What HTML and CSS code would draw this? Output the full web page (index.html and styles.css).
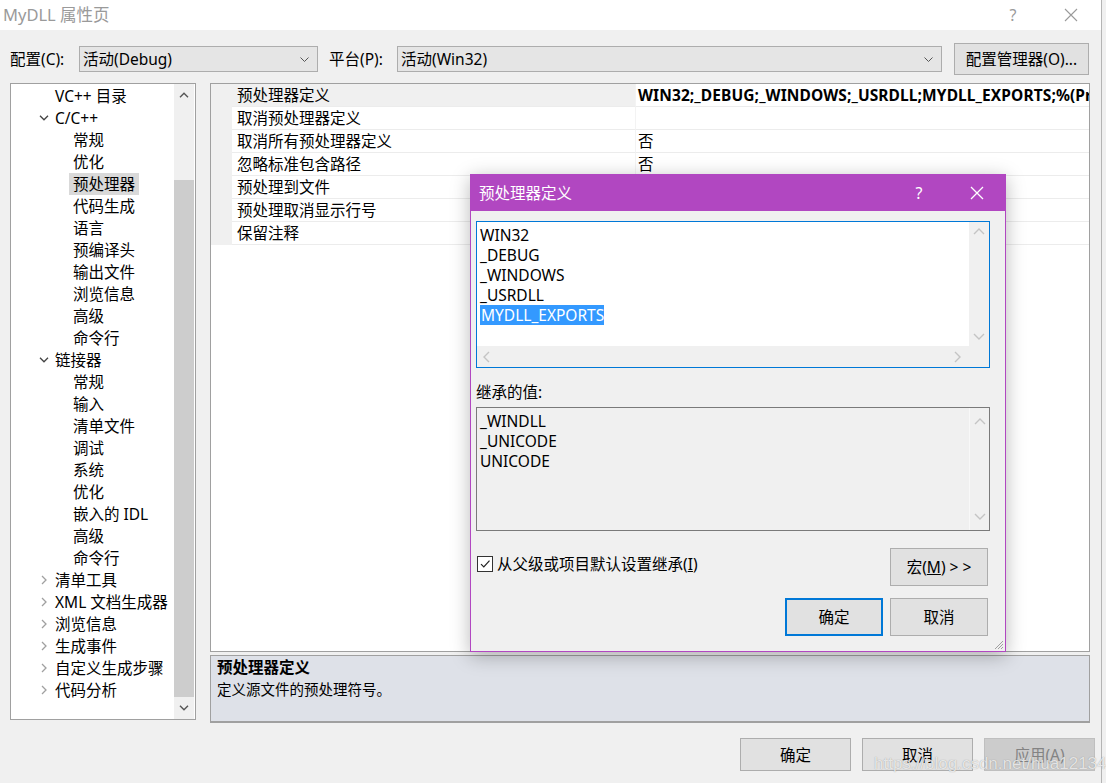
FILE: index.html
```html
<!DOCTYPE html>
<html lang="zh-CN">
<head>
<meta charset="utf-8">
<title>MyDLL 属性页</title>
<link rel="stylesheet" href="styles.css">
</head>
<body>
<div class="window">
  <div class="titlebar">
    <div class="title">MyDLL 属性页</div>
    <div class="tb-help">?</div>
    <div class="tb-close">
      <svg width="14" height="14" viewBox="0 0 14 14"><path d="M1 1 L13 13 M13 1 L1 13" stroke="#9a9a9a" stroke-width="1.1" fill="none"/></svg>
    </div>
  </div>

  <div class="toolbar">
    <span class="tlabel">配置(C):</span>
    <div class="select sel-config"><span>活动(Debug)</span>
      <svg width="9" height="5" viewBox="0 0 9 5"><path d="M0.5 0.5 L4.5 4.5 L8.5 0.5" stroke="#555" fill="none"/></svg>
    </div>
    <span class="tlabel plat">平台(P):</span>
    <div class="select sel-platform"><span>活动(Win32)</span>
      <svg width="9" height="5" viewBox="0 0 9 5"><path d="M0.5 0.5 L4.5 4.5 L8.5 0.5" stroke="#555" fill="none"/></svg>
    </div>
    <div class="btn cfgmgr">配置管理器(O)...</div>
  </div>

  <div class="main">
    <div class="tree">
      <div class="tree-list">
        <div class="ti l1"><span class="tw"></span>VC++ 目录</div>
        <div class="ti l1"><span class="tw"><svg width="10" height="6" viewBox="0 0 10 6"><path d="M1 0.8 L5 4.8 L9 0.8" stroke="#444" stroke-width="1.3" fill="none"/></svg></span>C/C++</div>
        <div class="ti l2"><span>常规</span></div>
        <div class="ti l2"><span>优化</span></div>
        <div class="ti l2"><span class="hl">预处理器</span></div>
        <div class="ti l2"><span>代码生成</span></div>
        <div class="ti l2"><span>语言</span></div>
        <div class="ti l2"><span>预编译头</span></div>
        <div class="ti l2"><span>输出文件</span></div>
        <div class="ti l2"><span>浏览信息</span></div>
        <div class="ti l2"><span>高级</span></div>
        <div class="ti l2"><span>命令行</span></div>
        <div class="ti l1"><span class="tw"><svg width="10" height="6" viewBox="0 0 10 6"><path d="M1 0.8 L5 4.8 L9 0.8" stroke="#444" stroke-width="1.3" fill="none"/></svg></span>链接器</div>
        <div class="ti l2"><span>常规</span></div>
        <div class="ti l2"><span>输入</span></div>
        <div class="ti l2"><span>清单文件</span></div>
        <div class="ti l2"><span>调试</span></div>
        <div class="ti l2"><span>系统</span></div>
        <div class="ti l2"><span>优化</span></div>
        <div class="ti l2"><span>嵌入的 IDL</span></div>
        <div class="ti l2"><span>高级</span></div>
        <div class="ti l2"><span>命令行</span></div>
        <div class="ti l1"><span class="tw"><svg width="6" height="10" viewBox="0 0 6 10"><path d="M1 1 L5 5 L1 9" stroke="#a0a0a0" stroke-width="1.3" fill="none"/></svg></span>清单工具</div>
        <div class="ti l1"><span class="tw"><svg width="6" height="10" viewBox="0 0 6 10"><path d="M1 1 L5 5 L1 9" stroke="#a0a0a0" stroke-width="1.3" fill="none"/></svg></span>XML 文档生成器</div>
        <div class="ti l1"><span class="tw"><svg width="6" height="10" viewBox="0 0 6 10"><path d="M1 1 L5 5 L1 9" stroke="#a0a0a0" stroke-width="1.3" fill="none"/></svg></span>浏览信息</div>
        <div class="ti l1"><span class="tw"><svg width="6" height="10" viewBox="0 0 6 10"><path d="M1 1 L5 5 L1 9" stroke="#a0a0a0" stroke-width="1.3" fill="none"/></svg></span>生成事件</div>
        <div class="ti l1"><span class="tw"><svg width="6" height="10" viewBox="0 0 6 10"><path d="M1 1 L5 5 L1 9" stroke="#a0a0a0" stroke-width="1.3" fill="none"/></svg></span>自定义生成步骤</div>
        <div class="ti l1"><span class="tw"><svg width="6" height="10" viewBox="0 0 6 10"><path d="M1 1 L5 5 L1 9" stroke="#a0a0a0" stroke-width="1.3" fill="none"/></svg></span>代码分析</div>
      </div>
      <div class="vscroll">
        <div class="sb-arrow"><svg width="10" height="6" viewBox="0 0 10 6"><path d="M1 5.2 L5 1.2 L9 5.2" stroke="#555" stroke-width="1.4" fill="none"/></svg></div>
        <div class="sb-track"><div class="sb-space"></div><div class="sb-thumb"></div></div>
        <div class="sb-arrow"><svg width="10" height="6" viewBox="0 0 10 6"><path d="M1 0.8 L5 4.8 L9 0.8" stroke="#555" stroke-width="1.4" fill="none"/></svg></div>
      </div>
    </div>

    <div class="right">
      <div class="grid">
        <div class="prow sel"><div class="pstrip"></div><div class="pname">预处理器定义</div><div class="pval strong">WIN32;_DEBUG;_WINDOWS;_USRDLL;MYDLL_EXPORTS;%(PreprocessorDefinitions)</div></div>
        <div class="prow"><div class="pstrip"></div><div class="pname">取消预处理器定义</div><div class="pval"></div></div>
        <div class="prow"><div class="pstrip"></div><div class="pname">取消所有预处理器定义</div><div class="pval">否</div></div>
        <div class="prow"><div class="pstrip"></div><div class="pname">忽略标准包含路径</div><div class="pval">否</div></div>
        <div class="prow"><div class="pstrip"></div><div class="pname">预处理到文件</div><div class="pval">否</div></div>
        <div class="prow"><div class="pstrip"></div><div class="pname">预处理取消显示行号</div><div class="pval">否</div></div>
        <div class="prow"><div class="pstrip"></div><div class="pname">保留注释</div><div class="pval">否</div></div>
      </div>
      <div class="desc">
        <div class="desc-title">预处理器定义</div>
        <div class="desc-text">定义源文件的预处理符号。</div>
      </div>
    </div>
  </div>

  <div class="footer">
    <div class="btn fbtn">确定</div>
    <div class="btn fbtn">取消</div>
    <div class="btn fbtn disabled">应用(A)</div>
  </div>

  <div class="dlg">
    <div class="dlg-title">
      <span class="dlg-name">预处理器定义</span>
      <span class="dlg-help">?</span>
      <span class="dlg-x"><svg width="14" height="14" viewBox="0 0 14 14"><path d="M1 1 L13 13 M13 1 L1 13" stroke="#fff" stroke-width="1.3" fill="none"/></svg></span>
    </div>
    <div class="dlg-body">
      <div class="edit">
        <div class="edit-main">
          <div class="edit-text">
            <div class="line">WIN32</div>
            <div class="line">_DEBUG</div>
            <div class="line">_WINDOWS</div>
            <div class="line">_USRDLL</div>
            <div class="line"><span class="selection">MYDLL_EXPORTS</span></div>
          </div>
          <div class="evsb">
            <svg width="12" height="7" viewBox="0 0 12 7"><path d="M1 6 L6 1 L11 6" stroke="#c4c4c4" stroke-width="1.4" fill="none"/></svg>
            <svg width="12" height="7" viewBox="0 0 12 7"><path d="M1 1 L6 6 L11 1" stroke="#c4c4c4" stroke-width="1.4" fill="none"/></svg>
          </div>
        </div>
        <div class="ehsb">
          <svg width="7" height="12" viewBox="0 0 7 12"><path d="M6 1 L1 6 L6 11" stroke="#c4c4c4" stroke-width="1.4" fill="none"/></svg>
          <svg width="7" height="12" viewBox="0 0 7 12"><path d="M1 1 L6 6 L1 11" stroke="#c4c4c4" stroke-width="1.4" fill="none"/></svg>
        </div>
      </div>
      <div class="inh-label">继承的值:</div>
      <div class="inh">
        <div class="inh-text">
          <div class="line">_WINDLL</div>
          <div class="line">_UNICODE</div>
          <div class="line">UNICODE</div>
        </div>
        <div class="evsb inh-sb">
          <svg width="12" height="7" viewBox="0 0 12 7"><path d="M1 6 L6 1 L11 6" stroke="#c4c4c4" stroke-width="1.4" fill="none"/></svg>
          <svg width="12" height="7" viewBox="0 0 12 7"><path d="M1 1 L6 6 L11 1" stroke="#c4c4c4" stroke-width="1.4" fill="none"/></svg>
        </div>
      </div>
      <div class="chkrow">
        <div class="chk">
          <span class="box"><svg width="12" height="12" viewBox="0 0 12 12"><path d="M2 6.2 L4.8 9 L10.5 2.6" stroke="#222" stroke-width="1.2" fill="none"/></svg></span>
          <span>从父级或项目默认设置继承(<u>I</u>)</span>
        </div>
        <div class="btn dbtn">宏(<u>M</u>)&nbsp;&gt; &gt;</div>
      </div>
      <div class="btnrow">
        <div class="btn dbtn primary">确定</div>
        <div class="btn dbtn">取消</div>
      </div>
    </div>
    <div class="grip">
      <svg width="10" height="10" viewBox="0 0 10 10"><path d="M9 1 L1 9 M9 4 L4 9 M9 7 L7 9" stroke="#a0a0a0" stroke-width="1" fill="none"/></svg>
    </div>
  </div>

  <div class="watermark">https://blog.csdn.net/hua12134</div>
</div>
</body>
</html>
```

FILE: styles.css
```css
* { box-sizing: border-box; }

html, body {
  margin: 0;
  padding: 0;
  background: #f0f0f0;
}

body {
  font-family: "Noto Sans", "Noto Sans CJK SC", sans-serif;
  font-size: 15.5px;
  color: #000;
  width: 1106px;
  height: 783px;
  overflow: hidden;
}

.window {
  position: relative;
  width: 1102px;
  height: 783px;
  background: #f0f0f0;
  border-right: 1px solid #b4b4b4;
}

/* title bar */
.titlebar {
  height: 30px;
  background: #fff;
  display: flex;
  align-items: center;
}
.title {
  flex: 1;
  padding-left: 3px;
  font-size: 16.5px;
  color: #9a9a9a;
  line-height: 30px;
}
.tb-help {
  width: 58px;
  text-align: center;
  color: #9a9a9a;
  font-size: 16px;
}
.tb-close {
  width: 58px;
  display: flex;
  justify-content: center;
  margin-right: 1px;
}

/* toolbar */
.toolbar {
  display: flex;
  align-items: center;
  height: 32px;
  margin-top: 13px;
  padding-left: 10px;
}
.tlabel {
  width: 69px;
  line-height: 20px;
}
.tlabel.plat {
  width: 68px;
  margin-left: 11px;
}
.select {
  height: 26px;
  background: #e5e5e5;
  border: 1px solid #adadad;
  display: flex;
  align-items: center;
  justify-content: space-between;
  padding: 0 8px 0 3px;
  line-height: 20px;
}
.sel-config { width: 239px; }
.sel-platform { width: 545px; }
.btn {
  background: #e1e1e1;
  border: 1px solid #adadad;
  display: flex;
  align-items: center;
  justify-content: center;
  line-height: 20px;
}
.cfgmgr {
  width: 135px;
  height: 32px;
  margin-left: 12px;
}

/* main */
.main {
  display: flex;
  margin-top: 8px;
  padding-left: 10px;
  height: 640px;
}

.tree {
  width: 186px;
  height: 637px;
  background: #fff;
  border: 1px solid #a0a0a0;
  display: flex;
}
.tree-list {
  flex: 1;
  padding-top: 1px;
  overflow: hidden;
}
.ti {
  height: 22px;
  line-height: 22px;
  white-space: nowrap;
  display: flex;
  align-items: center;
}
.ti.l1 { padding-left: 25px; }
.ti.l2 { padding-left: 58px; }
.ti.l2 span { padding: 0 4px; line-height: 22px; }
.ti .hl { background: #d9d9d9; }
.tw {
  width: 19px;
  height: 22px;
  display: flex;
  align-items: center;
  justify-content: center;
  padding-right: 3px;
}
.vscroll {
  width: 20px;
  margin-right: 1px;
  background: #f0f0f0;
  display: flex;
  flex-direction: column;
}
.sb-arrow {
  height: 22px;
  display: flex;
  align-items: center;
  justify-content: center;
}
.sb-track {
  flex: 1;
  display: flex;
  flex-direction: column;
}
.sb-space { height: 74px; }
.sb-thumb {
  flex: 1;
  background: #cdcdcd;
}

.right {
  margin-left: 14px;
  width: 880px;
  display: flex;
  flex-direction: column;
}
.grid {
  height: 570px;
  background: #fff;
  border: 1px solid #a0a0a0;
  overflow: hidden;
}
.prow {
  display: flex;
  height: 23px;
  line-height: 22px;
}
.pstrip {
  width: 21px;
  background: #f0f0f0;
}
.pname, .pval {
  border-bottom: 1px solid #ececec;
}
.pname {
  width: 404px;
  padding-left: 5px;
  white-space: nowrap;
  border-right: 1px solid #f3f3f3;
}
.prow.sel .pname { background: #f0f0f0; }
.pval {
  flex: 1;
  padding-left: 2px;
  white-space: nowrap;
  overflow: hidden;
}
.pval.strong { font-weight: bold; letter-spacing: 0.1px; }

.desc {
  margin-top: 3px;
  height: 68px;
  background: #dee1e8;
  border: 1px solid #a0a0a0;
  border-bottom: 2px solid #a0a0a0;
  padding: 0 6px;
}
.desc-title {
  font-weight: bold;
  line-height: 22px;
}
.desc-text {
  line-height: 22px;
  font-size: 14.5px;
}

/* footer */
.footer {
  display: flex;
  justify-content: flex-end;
  gap: 11px;
  margin-top: 15px;
  padding-right: 6px;
}
.fbtn {
  width: 111px;
  height: 33px;
}
.fbtn.disabled {
  background: #cccccc;
  border-color: #bfbfbf;
  color: #838383;
}

/* dialog (overlay) */
.dlg {
  position: absolute;
  left: 470px;
  top: 174px;
  width: 536px;
  height: 478px;
  background: #f0f0f0;
  border: 1px solid #b147c1;
  box-shadow: 0 4px 18px rgba(0,0,0,0.28);
}
.dlg-title {
  height: 37px;
  background: #b147c1;
  color: #fff;
  display: flex;
  align-items: center;
  margin: -1px -1px 0 -1px;
}
.dlg-name {
  flex: 1;
  padding-left: 9px;
}
.dlg-help {
  width: 58px;
  text-align: center;
  font-size: 16px;
}
.dlg-x {
  width: 58px;
  display: flex;
  justify-content: center;
}
.dlg-body {
  padding: 10px 15px 0 5px;
}
.edit {
  height: 147px;
  border: 1px solid #0078d7;
  background: #fff;
  display: flex;
  flex-direction: column;
}
.edit-main {
  flex: 1;
  display: flex;
}
.edit-text {
  flex: 1;
  padding: 3px 0 0 3px;
}
.line {
  height: 20px;
  line-height: 20px;
  white-space: nowrap;
}
.selection {
  background: #3399ff;
  color: #fff;
  display: inline-block;
  line-height: 20px;
  padding-left: 1px;
}
.evsb {
  width: 20px;
  background: #f0f0f0;
  display: flex;
  flex-direction: column;
  justify-content: space-between;
  align-items: center;
  padding: 6px 0 6px;
}
.ehsb {
  height: 21px;
  background: #f0f0f0;
  display: flex;
  justify-content: space-between;
  align-items: center;
  padding: 0 28px 0 6px;
}
.inh-label {
  margin-top: 14px;
  height: 25px;
  line-height: 20px;
}
.inh {
  height: 124px;
  border: 1px solid #7a7a7a;
  background: #f0f0f0;
  display: flex;
}
.inh-text {
  flex: 1;
  padding: 3px 0 0 3px;
}
.inh-sb {
  border-left: 1px solid #f8f8f8;
  padding: 10px 0 10px;
}
.chkrow {
  display: flex;
  justify-content: space-between;
  align-items: center;
  margin-top: 17px;
}
.chk {
  display: flex;
  align-items: center;
  padding-left: 1px;
  line-height: 20px;
  margin-bottom: 7px;
}
.box {
  width: 16px;
  height: 16px;
  border: 1px solid #333;
  background: #fff;
  display: flex;
  align-items: center;
  justify-content: center;
  margin-right: 4px;
}
.dbtn {
  width: 98px;
  height: 38px;
}
.chkrow .dbtn { margin-right: 2px; }
.btnrow {
  display: flex;
  justify-content: flex-end;
  gap: 7px;
  margin-top: 12px;
  padding-right: 2px;
}
.dbtn.primary {
  border: 2px solid #0078d7;
}
.grip {
  position: absolute;
  right: 1px;
  bottom: 1px;
  width: 10px;
  height: 10px;
  display: flex;
}

.watermark {
  position: absolute;
  left: 874px;
  top: 754px;
  font-family: "Liberation Sans", sans-serif;
  font-size: 17px;
  color: rgba(255,255,255,0.75);
  text-shadow: 0 0 1px rgba(90,90,90,0.6);
  white-space: nowrap;
}
```
